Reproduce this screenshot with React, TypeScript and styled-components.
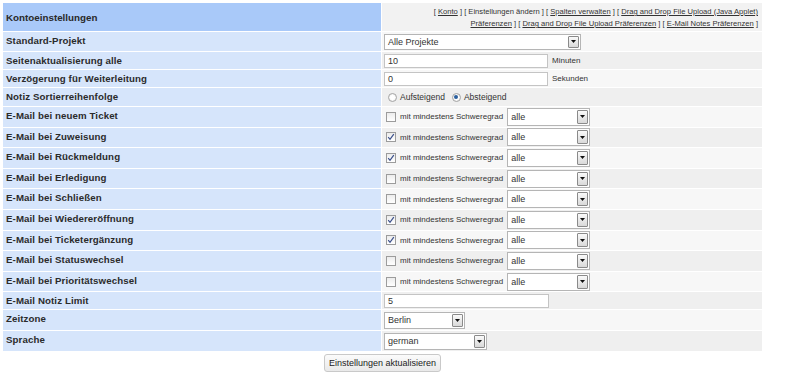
import React from "react";
import styled, { createGlobalStyle } from "styled-components";

const GlobalStyle = createGlobalStyle`
  html, body { margin: 0; padding: 0; background: #ffffff; }
  body { font-family: "Liberation Sans", Arial, sans-serif; color: #333333; }
`;

const Page = styled.div`
  width: 800px;
  padding: 3px 0 0 3px;
  box-sizing: border-box;
`;

const Table = styled.div`
  display: grid;
  grid-template-columns: 378px 380px;
  column-gap: 1px;
  row-gap: 1px;
  width: 759px;
`;

const HeadLabel = styled.div`
  background: #a9c9f9;
  height: 28px;
  display: flex;
  align-items: center;
  padding-left: 3px;
  font-size: 9.8px;
  font-weight: bold;
  color: #2a2a2a;
`;

const HeadLinks = styled.div`
  background: #f2f2f2;
  height: 28px;
  box-sizing: border-box;
  padding: 3px 4px 0 0;
  text-align: right;
  font-size: 7.6px;
  line-height: 12px;
  color: #333;
`;

const Link = styled.a<{ $current?: boolean }>`
  color: #333;
  text-decoration: ${(p) => (p.$current ? "none" : "underline")};
  cursor: pointer;
`;

const Label = styled.div<{ $h: number }>`
  background: #d6e5fb;
  height: ${(p) => p.$h}px;
  box-sizing: border-box;
  padding: 4px 0 0 3px;
  font-size: 9.7px;
  line-height: 10px;
  font-weight: bold;
  letter-spacing: 0.1px;
  color: #2b2b2b;
`;

const Cell = styled.div<{ $h: number; $alt: boolean }>`
  background: ${(p) => (p.$alt ? "#efefef" : "#f7f7f7")};
  height: ${(p) => p.$h}px;
  box-sizing: border-box;
  padding: 0 2px;
  display: flex;
  align-items: center;
  gap: 4px;
  font-size: 8px;
  color: #333;
`;

const SelectBox = styled.div<{ $w: number; $h: number }>`
  width: ${(p) => p.$w}px;
  height: ${(p) => p.$h}px;
  box-sizing: border-box;
  border: 1px solid #b5b5b5;
  background: #fff;
  display: flex;
  align-items: stretch;
  font-size: 9px;
  color: #333;
`;

const SelectText = styled.span`
  flex: 1;
  display: flex;
  align-items: center;
  padding-left: 3px;
`;

const SelectButton = styled.span`
  width: 11px;
  margin: 1px;
  box-sizing: border-box;
  border: 1px solid #8a8a8a;
  border-radius: 1px;
  background: linear-gradient(#fafafa, #d9d9d9);
  display: flex;
  align-items: center;
  justify-content: center;
`;

const TextInput = styled.div<{ $w: number }>`
  width: ${(p) => p.$w}px;
  height: 14px;
  box-sizing: border-box;
  border: 1px solid #c4c4c4;
  background: #fff;
  font-size: 9px;
  line-height: 12px;
  padding-left: 3px;
  color: #333;
`;

const Suffix = styled.span`
  font-size: 8px;
  color: #333;
`;

const Check = styled.span`
  width: 10px;
  height: 10px;
  box-sizing: border-box;
  border: 1px solid #9c9c9c;
  background: linear-gradient(#ececec, #ffffff);
  display: inline-flex;
  align-items: center;
  justify-content: center;
  margin-left: 2px;
`;

const Radio = styled.span<{ $on?: boolean }>`
  width: 9px;
  height: 9px;
  box-sizing: border-box;
  border-radius: 50%;
  border: 1px solid #a5a5a5;
  background: radial-gradient(circle, #ffffff 40%, #e0e0e0 100%);
  display: inline-flex;
  align-items: center;
  justify-content: center;
  margin-left: 4px;
  &::after {
    content: "";
    display: ${(p) => (p.$on ? "block" : "none")};
    width: 4px;
    height: 4px;
    border-radius: 50%;
    background: #2a5f9e;
  }
`;

const RadioGroup = styled.div`
  display: flex;
  align-items: center;
  gap: 3px;
  font-size: 8.5px;
`;

const Mail = styled.div`
  display: flex;
  align-items: center;
  gap: 4px;
`;

const ButtonRow = styled.div`
  width: 759px;
  display: flex;
  justify-content: center;
  padding-top: 3px;
`;

const Button = styled.button`
  font-family: "Liberation Sans", Arial, sans-serif;
  font-size: 9px;
  color: #222;
  height: 18px;
  padding: 0 4px;
  border: 1px solid #c9c9c9;
  border-radius: 3px;
  background: linear-gradient(#fbfbfb, #e9e9e9);
`;

const Arrow = () => (
  <svg width="5" height="3" viewBox="0 0 5 3">
    <path d="M0 0 H5 L2.5 3 Z" fill="#111" />
  </svg>
);

const Tick = () => (
  <svg width="8" height="8" viewBox="0 0 8 8">
    <path d="M1.2 4.2 L3 6.3 L6.8 1.2" fill="none" stroke="#3a4f8a" strokeWidth="1.2" />
  </svg>
);

const FakeSelect = ({ w, h, value }: { w: number; h: number; value: string }) => (
  <SelectBox $w={w} $h={h}>
    <SelectText>{value}</SelectText>
    <SelectButton>
      <Arrow />
    </SelectButton>
  </SelectBox>
);

type Row =
  | { label: string; kind: "select"; value: string; w: number; sh: number; h: number }
  | { label: string; kind: "input"; value: string; w: number; suffix?: string; h: number }
  | { label: string; kind: "radio"; h: number }
  | { label: string; kind: "mail"; checked: boolean; h: number };

const mail = (label: string, checked: boolean): Row => ({ label, kind: "mail", checked, h: 19.6 });

const rows: Row[] = [
  { label: "Standard-Projekt", kind: "select", value: "Alle Projekte", w: 197, sh: 16, h: 19 },
  { label: "Seitenaktualisierung alle", kind: "input", value: "10", w: 164, suffix: "Minuten", h: 17 },
  { label: "Verzögerung für Weiterleitung", kind: "input", value: "0", w: 164, suffix: "Sekunden", h: 17 },
  { label: "Notiz Sortierreihenfolge", kind: "radio", h: 18 },
  mail("E-Mail bei neuem Ticket", false),
  mail("E-Mail bei Zuweisung", true),
  mail("E-Mail bei Rückmeldung", true),
  mail("E-Mail bei Erledigung", false),
  mail("E-Mail bei Schließen", false),
  mail("E-Mail bei Wiedereröffnung", true),
  mail("E-Mail bei Ticketergänzung", true),
  mail("E-Mail bei Statuswechsel", false),
  mail("E-Mail bei Prioritätswechsel", false),
  { label: "E-Mail Notiz Limit", kind: "input", value: "5", w: 165, h: 17 },
  { label: "Zeitzone", kind: "select", value: "Berlin", w: 81, sh: 17, h: 20 },
  { label: "Sprache", kind: "select", value: "german", w: 103, sh: 17, h: 20 },
];

const renderControl = (r: Row) => {
  switch (r.kind) {
    case "select":
      return <FakeSelect w={r.w} h={r.sh} value={r.value} />;
    case "input":
      return (
        <>
          <TextInput $w={r.w}>{r.value}</TextInput>
          {r.suffix && <Suffix>{r.suffix}</Suffix>}
        </>
      );
    case "radio":
      return (
        <RadioGroup>
          <Radio />
          <span>Aufsteigend</span>
          <Radio $on />
          <span>Absteigend</span>
        </RadioGroup>
      );
    case "mail":
      return (
        <Mail>
          <Check>{r.checked && <Tick />}</Check>
          <Suffix>mit mindestens Schweregrad</Suffix>
          <FakeSelect w={83} h={18} value="alle" />
        </Mail>
      );
  }
};

export default function App() {
  return (
    <>
      <GlobalStyle />
      <Page>
        <Table>
          <HeadLabel>Kontoeinstellungen</HeadLabel>
          <HeadLinks>
            [ <Link>Konto</Link> ] [ <Link $current>Einstellungen ändern</Link> ] [ <Link>Spalten verwalten</Link> ] [{" "}
            <Link>Drag and Drop File Upload (Java Applet)</Link>
            <br />
            <Link>Präferenzen</Link> ] [ <Link>Drag and Drop File Upload Präferenzen</Link> ] [{" "}
            <Link>E-Mail Notes Präferenzen</Link> ]
          </HeadLinks>
          {rows.map((r, i) => (
            <React.Fragment key={r.label}>
              <Label $h={r.h}>{r.label}</Label>
              <Cell $h={r.h} $alt={i % 2 === 1}>
                {renderControl(r)}
              </Cell>
            </React.Fragment>
          ))}
        </Table>
        <ButtonRow>
          <Button>Einstellungen aktualisieren</Button>
        </ButtonRow>
      </Page>
    </>
  );
}
